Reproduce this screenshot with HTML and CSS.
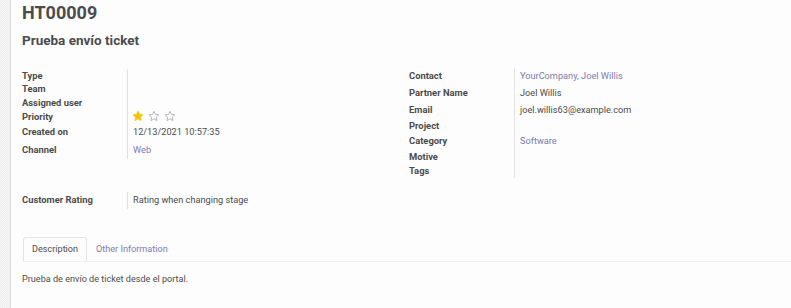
FILE: index.html
```html
<!DOCTYPE html>
<html lang="es">
<head>
  <meta charset="UTF-8" />
  <title>HT00009</title>
  <link rel="stylesheet" href="styles.css">
</head>
<body>
  <div class="strip"></div>
  <div class="sheet">
    <h1 class="ref">HT00009</h1>
    <h2 class="subject">Prueba envío ticket</h2>

    <div class="groups">
      <div class="group">
        <div class="row h14"><span class="label">Type</span><span class="value"></span></div>
        <div class="row h13"><span class="label">Team</span><span class="value"></span></div>
        <div class="row h13"><span class="label">Assigned user</span><span class="value"></span></div>
        <div class="row h14">
          <span class="label">Priority</span>
          <span class="value stars">
            <svg viewBox="0 0 24 24" class="star on"><path d="M12 2.5l2.9 6.4 6.9.7-5.2 4.7 1.5 6.9L12 17.6l-6.1 3.6 1.5-6.9-5.2-4.7 6.9-.7z"/></svg>
            <svg viewBox="0 0 24 24" class="star"><path d="M12 2.5l2.9 6.4 6.9.7-5.2 4.7 1.5 6.9L12 17.6l-6.1 3.6 1.5-6.9-5.2-4.7 6.9-.7z"/></svg>
            <svg viewBox="0 0 24 24" class="star"><path d="M12 2.5l2.9 6.4 6.9.7-5.2 4.7 1.5 6.9L12 17.6l-6.1 3.6 1.5-6.9-5.2-4.7 6.9-.7z"/></svg>
          </span>
        </div>
        <div class="row h17"><span class="label">Created on</span><span class="value">12/13/2021 10:57:35</span></div>
        <div class="row h19"><span class="label">Channel</span><span class="value link">Web</span></div>
      </div>

      <div class="group right">
        <div class="row h17"><span class="label">Contact</span><span class="value link">YourCompany, Joel Willis</span></div>
        <div class="row h17"><span class="label">Partner Name</span><span class="value">Joel Willis</span></div>
        <div class="row h17"><span class="label">Email</span><span class="value">joel.willis63@example.com</span></div>
        <div class="row h16"><span class="label">Project</span><span class="value"></span></div>
        <div class="row h15"><span class="label">Category</span><span class="value link">Software</span></div>
        <div class="row h16"><span class="label">Motive</span><span class="value"></span></div>
        <div class="row h13"><span class="label">Tags</span><span class="value"></span></div>
      </div>
    </div>

    <div class="group single">
      <div class="row h19"><span class="label">Customer Rating</span><span class="value">Rating when changing stage</span></div>
    </div>

    <div class="tabs">
      <span class="tab active">Description</span>
      <span class="tab">Other Information</span>
    </div>
    <p class="desc">Prueba de envío de ticket desde el portal.</p>
  </div>
</body>
</html>
```

FILE: styles.css
```css
html, body {
  margin: 0;
  height: 100%;
}
body {
  display: flex;
  background: #fdfdfd;
  font-family: Roboto, "Liberation Sans", sans-serif;
  color: #4c4c4c;
  font-size: 9.1px;
}
.strip {
  width: 10px;
  flex: none;
  border-right: 1px solid #dcdcdc;
  background: repeating-conic-gradient(#ececec 0 25%, #f7f7f7 0 50%) 0 0 / 2px 2px;
}
.sheet {
  flex: 1;
  padding: 0 0 0 11px;
}
.ref {
  margin: 1px 0 0;
  font-size: 18px;
  line-height: 24px;
  font-weight: bold;
}
.subject {
  margin: 6px 0 0;
  font-size: 13.5px;
  line-height: 18px;
  font-weight: bold;
}
.groups {
  display: flex;
  align-items: flex-start;
  margin-top: 19px;
}
.group {
  width: 387px;
  position: relative;
}
.group.right {
  margin-top: -1.5px;
}
.group::after {
  content: "";
  position: absolute;
  left: 105px;
  top: 1px;
  bottom: 0;
  border-left: 1px solid #e2e2e2;
}
.row {
  display: flex;
  align-items: center;
}
.h13 { height: 13.5px; }
.h14 { height: 14px; }
.h15 { height: 14.5px; }
.h16 { height: 16px; }
.h17 { height: 17px; }
.h19 { height: 18.5px; }
.label {
  width: 111px;
  flex: none;
  font-weight: bold;
  font-size: 9.4px;
}
.value {
  font-size: 9.2px;
}
.link {
  color: #7c7bad;
}
.stars {
  display: flex;
  gap: 4px;
  margin-left: -1px;
}
.star {
  width: 12px;
  height: 12px;
  fill: none;
  stroke: #a9a9a9;
  stroke-width: 1.6;
}
.star.on {
  fill: #f3c500;
  stroke: #f3c500;
}
.single {
  margin-top: 13px;
}
.tabs {
  display: flex;
  margin: 28px 0 0 1px;
  border-bottom: 1.5px solid #eeeeee;
}
.tab {
  padding: 0 8px;
  height: 23px;
  line-height: 23px;
  color: #7c7bad;
  border: 1px solid transparent;
  border-bottom: none;
}
.tab.active {
  color: #4c4c4c;
  border-color: #e4e4e4;
  border-radius: 3px 3px 0 0;
  background: #fdfdfd;
  margin-bottom: -1.5px;
}
.desc {
  margin: 12px 0 0;
}
```
